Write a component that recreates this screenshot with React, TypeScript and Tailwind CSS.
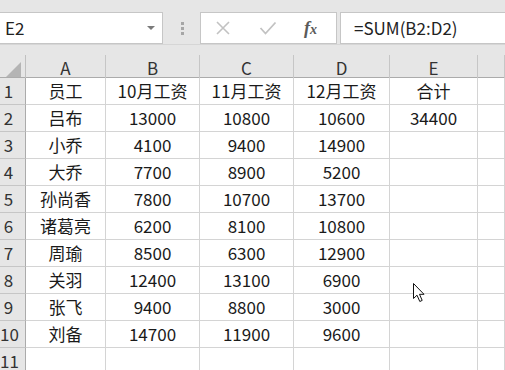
import React from 'react';

const font = { fontFamily: '"Noto Sans CJK SC", "Noto Sans", sans-serif' };

const columns = ['A', 'B', 'C', 'D', 'E', ''];

const rows: string[][] = [
  ['员工', '10月工资', '11月工资', '12月工资', '合计', ''],
  ['吕布', '13000', '10800', '10600', '34400', ''],
  ['小乔', '4100', '9400', '14900', '', ''],
  ['大乔', '7700', '8900', '5200', '', ''],
  ['孙尚香', '7800', '10700', '13700', '', ''],
  ['诸葛亮', '6200', '8100', '10800', '', ''],
  ['周瑜', '8500', '6300', '12900', '', ''],
  ['关羽', '12400', '13100', '6900', '', ''],
  ['张飞', '9400', '8800', '3000', '', ''],
  ['刘备', '14700', '11900', '9600', '', ''],
  ['', '', '', '', '', ''],
];

const gridCols = 'grid grid-cols-[26px_80px_94px_94px_96px_88px_1fr]';

const Cursor: React.FC = () => (
  <svg
    className="absolute left-[412px] top-[282px]"
    width="14"
    height="21"
    viewBox="0 0 14 21"
  >
    <path
      d="M1.5 1.5 L1.5 16.5 L5 13.2 L7.8 19.5 L10.2 18.4 L7.5 12.3 L12 12.3 Z"
      fill="#fff"
      stroke="#111"
      strokeWidth="1"
      strokeLinejoin="miter"
    />
  </svg>
);

export default function App() {
  return (
    <div className="relative w-[505px] h-[370px] overflow-hidden bg-white" style={font}>
      {/* formula bar */}
      <div className="h-[45px] bg-[#e6e6e6] flex items-start pt-3 border-b border-[#d6d6d6]">
        <div className="shrink-0 -ml-px w-[164px] h-8 bg-white border border-[#c6c6c6] flex items-center justify-between pl-[5px] pr-[7px]">
          <span className="text-[17px] text-[#222]">E2</span>
          <span className="w-0 h-0 border-l-[4px] border-r-[4px] border-t-[4px] border-l-transparent border-r-transparent border-t-[#7a7a7a]" />
        </div>
        <div className="shrink-0 w-[37px] h-8 flex flex-col items-center justify-center gap-[2px] pl-[1px]">
          <span className="w-[3px] h-[3px] bg-[#a6a6a6]" />
          <span className="w-[3px] h-[3px] bg-[#a6a6a6]" />
          <span className="w-[3px] h-[3px] bg-[#a6a6a6]" />
        </div>
        <div className="shrink-0 w-[137px] h-8 bg-white border border-[#c6c6c6] flex items-center">
          <svg className="ml-[14px]" width="16" height="14" viewBox="0 0 16 14">
            <path d="M2 1 L14 13 M14 1 L2 13" stroke="#c2c2c2" strokeWidth="1.6" />
          </svg>
          <svg className="ml-[28px]" width="18" height="14" viewBox="0 0 18 14">
            <path d="M1.5 7 L6.5 12.5 L16.5 1.5" stroke="#c2c2c2" strokeWidth="1.8" fill="none" />
          </svg>
          <span
            className="ml-[27px] text-[18px] italic font-bold text-[#5a5a5a] leading-none"
            style={{ fontFamily: '"Liberation Serif", serif' }}
          >
            f<span className="text-[14px]">x</span>
          </span>
        </div>
        <div className="shrink-0 ml-[3px] w-[200px] h-8 bg-white border border-[#c6c6c6] flex items-center pl-[13px]">
          <span className="text-[17px] text-[#222]">=SUM(B2:D2)</span>
        </div>
      </div>

      {/* spacer above headers */}
      <div className="h-[10px] bg-[#e6e6e6]" />

      {/* column headers */}
      <div className={`${gridCols} h-[23px] bg-[#e6e6e6] border-b border-[#ababab]`}>
        <div className="border-r border-[#c0c0c0] flex items-end justify-center pb-[3px] pl-[4px] pr-[3px]">
          <svg width="16" height="16" viewBox="0 0 16 16" className="ml-[2px]">
            <path d="M15 0 L15 15 L0 15 Z" fill="#b4b4b4" />
          </svg>
        </div>
        {columns.map((c, i) => (
          <div
            key={i}
            className="border-r border-[#c6c6c6] flex items-center justify-center text-[17px] text-[#333]"
          >
            {c}
          </div>
        ))}
      </div>

      {/* rows */}
      {rows.map((r, ri) => (
        <div key={ri} className={`${gridCols} h-[27px]`}>
          <div className="bg-[#e6e6e6] border-r border-b border-[#ababab] border-b-[#c6c6c6] flex items-center">
            <span className="w-[17px] text-center text-[17px] text-[#333]">{ri + 1}</span>
          </div>
          {r.map((v, ci) => (
            <div
              key={ci}
              className="border-r border-b border-[#d4d4d4] flex items-center justify-center text-[17px] text-[#1a1a1a] whitespace-nowrap"
            >
              {v}
            </div>
          ))}
        </div>
      ))}

      <Cursor />
    </div>
  );
}
